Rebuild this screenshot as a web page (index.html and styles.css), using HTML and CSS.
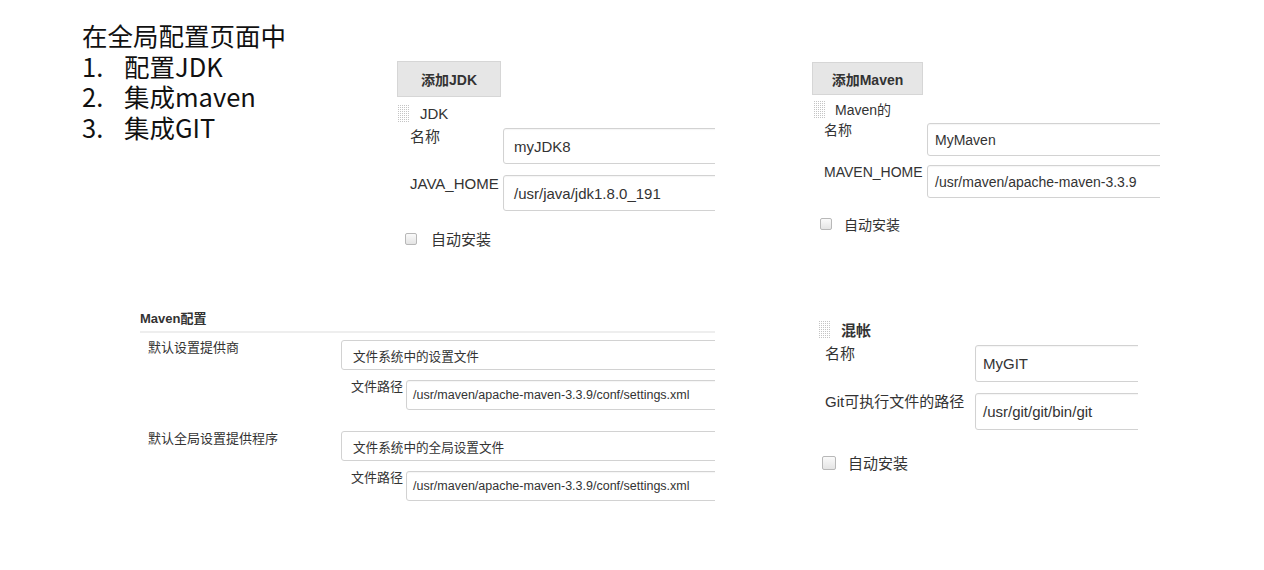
FILE: index.html
```html
<!DOCTYPE html>
<html lang="zh">
<head>
    <meta charset="utf-8"/>
    <title>全局配置</title>
    <link rel="stylesheet" href="styles.css">
</head>
<body>
<div class="slide">
    <div class="intro">
        <div class="intro-title">在全局配置页面中</div>
        <div class="intro-item"><span class="num">1.</span><span>配置JDK</span></div>
        <div class="intro-item"><span class="num">2.</span><span>集成maven</span></div>
        <div class="intro-item"><span class="num">3.</span><span>集成GIT</span></div>
    </div>

    <!-- JDK -->
    <div class="shot shot-jdk">
        <div class="add-button">添加JDK</div>
        <div class="section-head"><span class="grip"></span><span>JDK</span></div>
        <div class="form-grid">
            <div class="label">名称</div>
            <div class="input">myJDK8</div>
            <div class="label">JAVA_HOME</div>
            <div class="input">/usr/java/jdk1.8.0_191</div>
        </div>
        <div class="check-row"><span class="checkbox"></span><span>自动安装</span></div>
    </div>

    <!-- Maven -->
    <div class="shot shot-maven">
        <div class="add-button">添加Maven</div>
        <div class="section-head"><span class="grip"></span><span>Maven的</span></div>
        <div class="form-grid">
            <div class="label">名称</div>
            <div class="input">MyMaven</div>
            <div class="label">MAVEN_HOME</div>
            <div class="input">/usr/maven/apache-maven-3.3.9</div>
        </div>
        <div class="check-row"><span class="checkbox"></span><span>自动安装</span></div>
    </div>

    <!-- Maven 配置 -->
    <div class="shot shot-config">
        <div class="config-title">Maven配置</div>
        <div class="config-group">
            <div class="config-label">默认设置提供商</div>
            <div class="config-fields">
                <div class="select">文件系统中的设置文件</div>
                <div class="path-row">
                    <span class="path-label">文件路径</span>
                    <div class="input path-input">/usr/maven/apache-maven-3.3.9/conf/settings.xml</div>
                </div>
            </div>
        </div>
        <div class="config-group">
            <div class="config-label">默认全局设置提供程序</div>
            <div class="config-fields">
                <div class="select">文件系统中的全局设置文件</div>
                <div class="path-row">
                    <span class="path-label">文件路径</span>
                    <div class="input path-input">/usr/maven/apache-maven-3.3.9/conf/settings.xml</div>
                </div>
            </div>
        </div>
    </div>

    <!-- Git -->
    <div class="shot shot-git">
        <div class="section-head"><span class="grip"></span><span class="bold">混帐</span></div>
        <div class="form-grid">
            <div class="label">名称</div>
            <div class="input">MyGIT</div>
            <div class="label">Git可执行文件的路径</div>
            <div class="input">/usr/git/git/bin/git</div>
        </div>
        <div class="check-row"><span class="checkbox"></span><span>自动安装</span></div>
    </div>
</div>
</body>
</html>
```

FILE: styles.css
```css
body {
    margin: 0;
    background-color: #fff;
}

.slide {
    position: relative;
    width: 1264px;
    height: 570px;
    overflow: hidden;
    background-color: #fff;
}

.intro {
    position: absolute;
    left: 82px;
    top: 20px;
    font-family: "Noto Sans CJK SC", "Noto Sans", sans-serif;
    font-size: 25.5px;
    line-height: 30.5px;
    color: #111;
}

.intro-title,
.intro-item {
    height: 30.5px;
}

.intro-item {
    display: flex;
}

.intro-item .num {
    width: 42px;
}

/* pasted screenshots */
.shot {
    position: absolute;
    overflow: hidden;
    font-family: "Liberation Sans", "Noto Sans CJK SC", sans-serif;
    color: #333;
}

.add-button {
    display: flex;
    align-items: center;
    justify-content: center;
    box-sizing: border-box;
    background-color: #e6e6e6;
    border: 1px solid #d6d6d6;
    font-weight: bold;
    font-size: 14px;
    color: #333;
}

.section-head {
    display: flex;
    align-items: center;
}

.grip {
    width: 13px;
    height: 18px;
    background-color: #c4c4c4;
    background-image: linear-gradient(90deg, #fff 1px, transparent 1px),
        linear-gradient(#fff 1px, transparent 1px);
    background-size: 2px 2px;
}

.bold {
    font-weight: bold;
}

.form-grid {
    display: grid;
    align-items: start;
}

.label {
    line-height: 18px;
    white-space: nowrap;
}

.input {
    display: flex;
    align-items: center;
    box-sizing: border-box;
    width: 400px;
    border: 1px solid #d2d2d2;
    border-radius: 3px;
    box-shadow: inset 0 1px 1px rgba(0, 0, 0, 0.04);
    white-space: nowrap;
    color: #333;
}

.check-row {
    display: flex;
    align-items: center;
}

.checkbox {
    box-sizing: border-box;
    border: 1px solid #b8b8b8;
    border-radius: 2px;
    background: linear-gradient(#fafafa, #e4e4e4);
}

/* JDK */
.shot-jdk {
    left: 397px;
    top: 61px;
    width: 318px;
    height: 200px;
    font-size: 15px;
}

.shot-jdk .add-button {
    width: 104px;
    height: 36px;
}

.shot-jdk .section-head {
    margin-top: 7px;
    gap: 10px;
    height: 18px;
}

.shot-jdk .form-grid {
    margin-top: 6px;
    padding-left: 13px;
    grid-template-columns: 93px 1fr;
    row-gap: 11px;
}

.shot-jdk .input {
    height: 36px;
    padding-left: 10px;
}

.shot-jdk .check-row {
    margin-top: 17px;
    padding-left: 8px;
    gap: 14px;
}

.shot-jdk .checkbox {
    width: 12px;
    height: 12px;
}

/* Maven */
.shot-maven {
    left: 812px;
    top: 62px;
    width: 348px;
    height: 180px;
    font-size: 14px;
}

.shot-maven .add-button {
    width: 111px;
    height: 33px;
}

.shot-maven .section-head {
    margin-top: 5px;
    margin-left: 1px;
    gap: 9px;
    height: 18px;
}

.shot-maven .form-grid {
    margin-top: 5px;
    padding-left: 12px;
    grid-template-columns: 103px 1fr;
    row-gap: 9px;
}

.shot-maven .label {
    margin-top: -2px;
}

.shot-maven .input {
    height: 33px;
    padding-left: 7px;
}

.shot-maven .check-row {
    margin-top: 16px;
    padding-left: 8px;
    gap: 12px;
}

.shot-maven .checkbox {
    width: 12px;
    height: 12px;
}

/* Maven 配置 */
.shot-config {
    left: 140px;
    top: 310px;
    width: 575px;
    height: 200px;
    font-size: 13px;
}

.config-title {
    font-weight: bold;
    line-height: 18px;
    padding-bottom: 3px;
    border-bottom: 2px solid #eee;
}

.config-group {
    display: grid;
    grid-template-columns: 201px 1fr;
    margin-top: 7px;
}

.config-group + .config-group {
    margin-top: 21px;
}

.config-label {
    padding-left: 8px;
    line-height: 16px;
}

.select {
    box-sizing: border-box;
    width: 400px;
    height: 30px;
    display: flex;
    align-items: center;
    padding-left: 11px;
    border: 1px solid #d2d2d2;
    border-radius: 3px;
    font-size: 12.6px;
}

.path-row {
    display: flex;
    align-items: flex-start;
    margin-top: 10px;
    padding-left: 10px;
    gap: 3px;
}

.path-label {
    line-height: 14px;
    white-space: nowrap;
}

.shot-config .path-input {
    height: 30px;
    padding-left: 6px;
    font-size: 12.5px;
}

/* Git */
.shot-git {
    left: 818px;
    top: 320px;
    width: 320px;
    height: 160px;
    font-size: 15px;
}

.shot-git .section-head {
    gap: 10px;
    height: 18px;
}

.shot-git .form-grid {
    margin-top: 7px;
    padding-left: 7px;
    grid-template-columns: 150px 1fr;
    row-gap: 11px;
}

.shot-git .label {
    line-height: 18px;
}

.shot-git .input {
    height: 37px;
    padding-left: 7px;
}

.shot-git .check-row {
    margin-top: 22px;
    padding-left: 4px;
    gap: 12px;
}

.shot-git .checkbox {
    width: 14px;
    height: 14px;
}
```
